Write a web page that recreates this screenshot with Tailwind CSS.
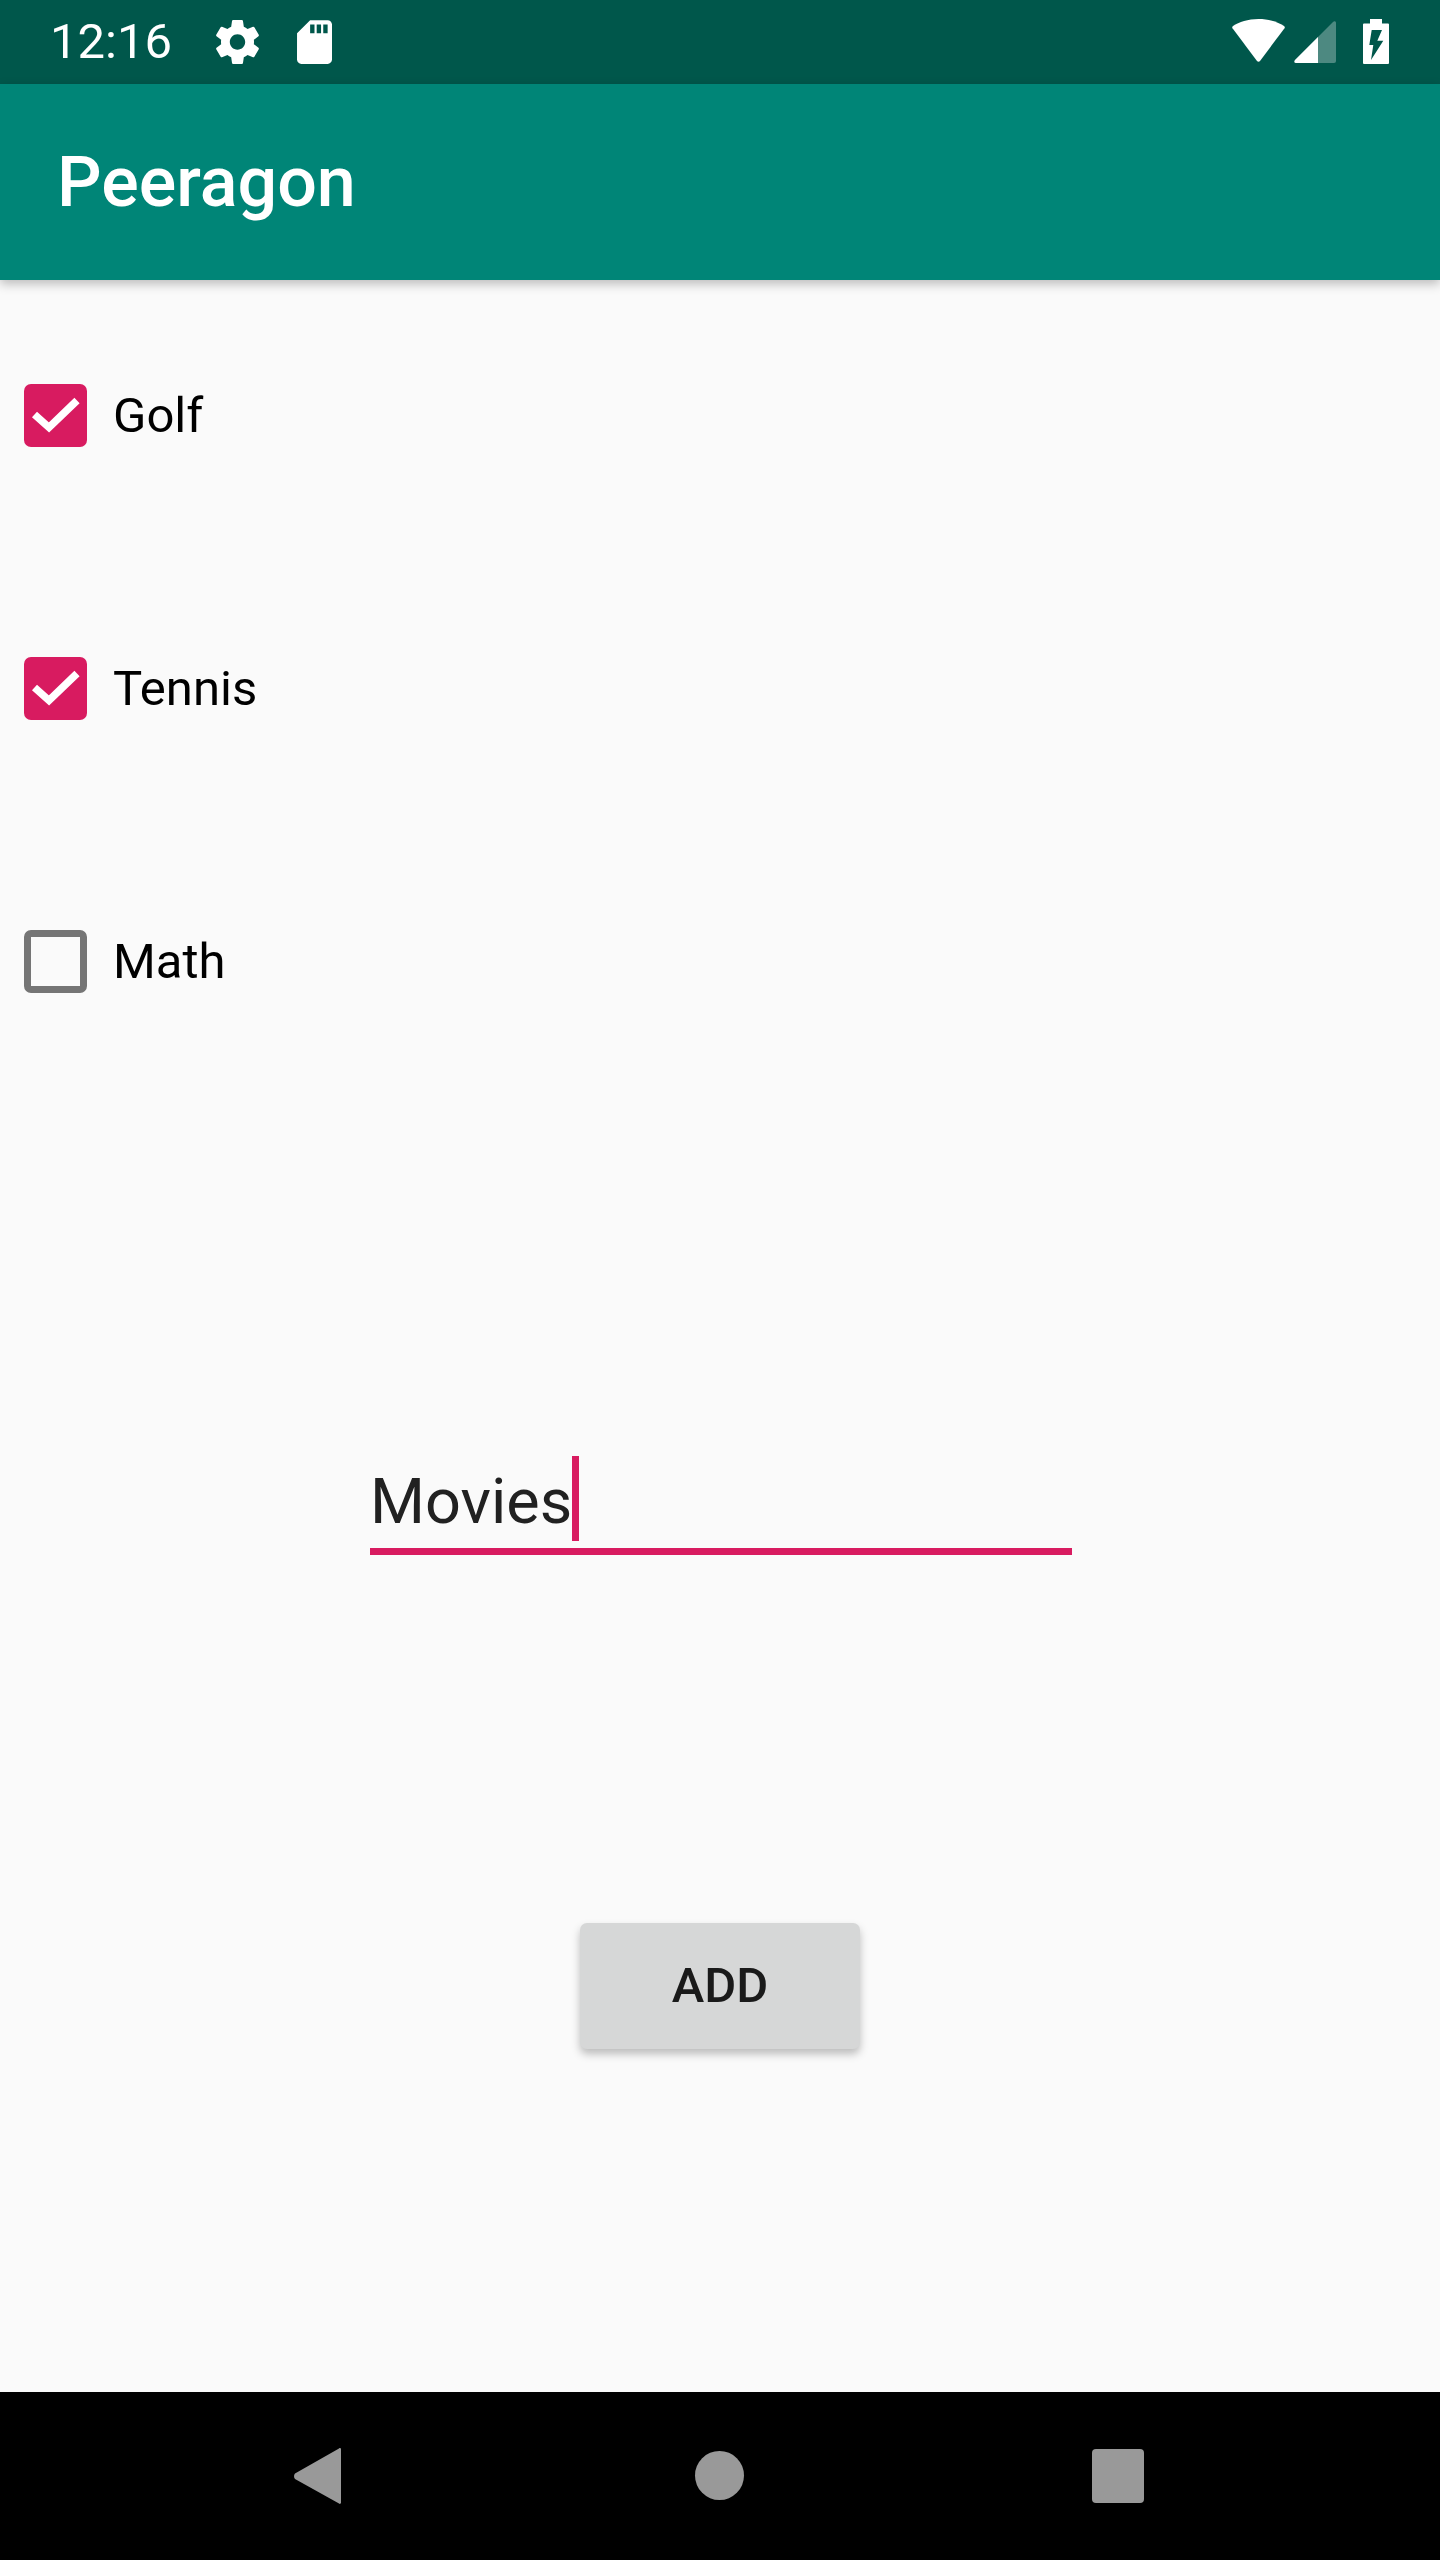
<!DOCTYPE html>
<html lang="en">
<head>
    <meta charset="UTF-8">
    <meta name="viewport" content="width=device-width, initial-scale=1.0">
    <title>Peeragon</title>
    <script src="https://cdn.jsdelivr.net/npm/@tailwindcss/browser@4"></script>
</head>
<body class="bg-[#fafafa] font-[Roboto,sans-serif]">
    <div class="w-[1440px] h-[2560px] flex flex-col overflow-hidden">

        <!-- Status bar -->
        <div class="h-[84px] bg-[#00574b] flex items-center text-white shrink-0">
            <span class="ml-[50px] w-[166px] text-[49px] leading-[84px]">12:16</span>
            <svg class="w-[43px] h-[44px] mb-[1px]" viewBox="2.4 2 19.2 20" fill="#fff"><path d="M19.43 12.98c.04-.32.07-.64.07-.98s-.03-.66-.07-.98l2.11-1.65c.19-.15.24-.42.12-.64l-2-3.46c-.12-.22-.39-.3-.61-.22l-2.49 1c-.52-.4-1.08-.73-1.69-.98l-.38-2.65C14.46 2.18 14.25 2 14 2h-4c-.25 0-.46.18-.49.42l-.38 2.65c-.61.25-1.17.59-1.69.98l-2.49-1c-.23-.09-.49 0-.61.22l-2 3.46c-.13.22-.07.49.12.64l2.11 1.65c-.04.32-.07.65-.07.98s.03.66.07.98l-2.11 1.65c-.19.15-.24.42-.12.64l2 3.46c.12.22.39.3.61.22l2.49-1c.52.4 1.08.73 1.69.98l.38 2.65c.03.24.24.42.49.42h4c.25 0 .46-.18.49-.42l.38-2.65c.61-.25 1.17-.59 1.69-.98l2.49 1c.23.09.49 0 .61-.22l2-3.46c.12-.22.07-.49-.12-.64l-2.11-1.65zM12 15.5c-1.93 0-3.5-1.57-3.5-3.5s1.57-3.5 3.5-3.5 3.5 1.57 3.5 3.5-1.57 3.5-3.5 3.5z"/></svg>
            <svg class="ml-[38px] w-[35px] h-[44px] mb-[1px]" viewBox="4 2 16 20" fill="#fff"><path d="M18 2h-8L4.02 8 4 20c0 1.1.9 2 2 2h12c1.1 0 2-.9 2-2V4c0-1.1-.9-2-2-2zm-6 6h-2V4h2v4zm3 0h-2V4h2v4zm3 0h-2V4h2v4z"/></svg>
            <svg class="ml-auto w-[53px] h-[43px] mb-[3px]" viewBox="0 0 53 43" fill="#fff"><path d="M26.5 0C16 0 7 3 1 7c-1 .7-1 1.5-.5 2.2L25 42c.8 1 2.2 1 3 0L52.5 9.2c.5-.7.5-1.5-.5-2.2C46 3 37 0 26.5 0z"/></svg>
            <svg class="ml-[9px] w-[42px] h-[42px]" viewBox="0 0 42 42" fill="#fff"><path opacity=".3" d="M42 2v38a2 2 0 0 1-2 2H2c-2 0-2-2-1-3L39 1c1-1 3-1 3 1z"/><path d="M24 16V42H2c-2 0-2-2-1-3z"/></svg>
            <svg class="ml-[27px] mr-[51px] w-[26px] h-[45px] mb-[1px]" viewBox="0 0 26 45" fill="#fff"><path fill-rule="evenodd" d="M7 0h12v4.500h6a1 1 0 0 1 1 1V44a1 1 0 0 1-1 1H1a1 1 0 0 1-1-1V5.500a1 1 0 0 1 1-1h6zM8.700 11L6.300 26h4L8 41 20.300 21.700h-6L19 11z"/></svg>
        </div>

        <!-- App bar -->
        <div class="relative z-10 h-[196px] bg-[#008577] flex items-center pl-[57px] shadow-[0_4px_10px_rgba(0,0,0,0.25)] shrink-0">
            <h1 class="text-white text-[70px] font-medium leading-none">Peeragon</h1>
        </div>

        <!-- Content -->
        <main class="flex-1 flex flex-col pt-[104px]">
            <div class="flex flex-col gap-[210px] pl-[24px]">
                <label class="h-[63px] flex items-center gap-[26px]">
                    <span class="w-[63px] h-[63px] rounded-[7px] bg-[#d81b60] flex items-center justify-center">
                        <svg class="w-[63px] h-[63px]" viewBox="0 0 63 63" fill="none" stroke="#fff" stroke-width="7.500"><path d="M10.500 30.500L25 43.500 53 16.500"/></svg>
                    </span>
                    <span class="text-[49px] text-black">Golf</span>
                </label>
                <label class="h-[63px] flex items-center gap-[26px]">
                    <span class="w-[63px] h-[63px] rounded-[7px] bg-[#d81b60] flex items-center justify-center">
                        <svg class="w-[63px] h-[63px]" viewBox="0 0 63 63" fill="none" stroke="#fff" stroke-width="7.500"><path d="M10.500 30.500L25 43.500 53 16.500"/></svg>
                    </span>
                    <span class="text-[49px] text-black">Tennis</span>
                </label>
                <label class="h-[63px] flex items-center gap-[26px]">
                    <span class="w-[63px] h-[63px] rounded-[7px] border-[7px] border-[#757575]"></span>
                    <span class="text-[49px] text-black">Math</span>
                </label>
            </div>

            <div class="mt-[463px] ml-[370px] w-[702px] h-[99px] border-b-[7px] border-[#d81b60] flex items-start">
                <span class="text-[63px] leading-[85px] mt-[3px] text-[#212121]">Movies</span>
                <span class="w-[7px] h-[85px] bg-[#d81b60]"></span>
            </div>

            <button class="mt-[368px] mx-auto w-[280px] h-[126px] rounded-[7px] bg-[#d6d7d7] text-[#1a1a1a] text-[49px] font-medium shadow-[0_5px_9px_rgba(0,0,0,0.25)]">ADD</button>
        </main>

        <!-- Navigation bar -->
        <div class="h-[168px] bg-black relative shrink-0">
            <svg class="absolute left-[294px] top-[56px] w-[48px] h-[56px]" viewBox="0 0 48 56" fill="#999"><path d="M47 1.500V54.500c0 1.300-1.200 1.800-2 1L1 31c-1.300-1.500-1.300-4 0-5.500L45 .5c.8-.8 2-.3 2 1z"/></svg>
            <span class="absolute left-[695px] top-[59px] w-[49px] h-[49px] rounded-full bg-[#999]"></span>
            <span class="absolute left-[1092px] top-[57px] w-[52px] h-[54px] rounded-[4px] bg-[#999]"></span>
        </div>
    </div>
</body>
</html>
